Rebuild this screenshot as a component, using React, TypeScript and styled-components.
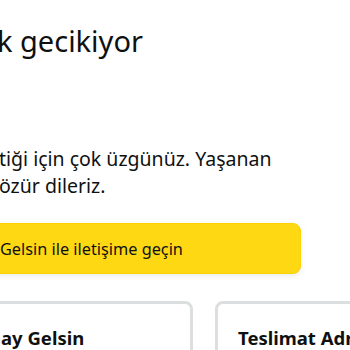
import React from "react";
import styled, { createGlobalStyle } from "styled-components";

const Global = createGlobalStyle`
  html, body { margin: 0; padding: 0; background: #ffffff; }
  body { font-family: "Noto Sans", "Open Sans", Arial, sans-serif; color: #0f1111; overflow: hidden; }
`;

const Page = styled.main`
  width: 350px;
  height: 350px;
  overflow: hidden;
  display: flex;
  flex-direction: column;
  & > * { flex-shrink: 0; }
`;

const Title = styled.h1`
  margin: 23px 0 0 -3px;
  font-size: 29px;
  font-weight: 400;
  line-height: 36px;
  white-space: nowrap;
`;

const Message = styled.p`
  margin: 86px 0 0 -1px;
  font-size: 19.5px;
  line-height: 27px;
  white-space: nowrap;
`;

const ContactButton = styled.button`
  margin: 24px 0 0 -20px;
  width: 321px;
  height: 51px;
  box-sizing: border-box;
  border: 1px solid #fcd200;
  border-radius: 8px;
  background: #ffd814;
  color: #0f1111;
  font-family: inherit;
  font-size: 16.3px;
  text-align: left;
  padding: 0 0 0 19px;
  box-shadow: 0 2px 5px 0 rgba(213, 217, 217, 0.5);
`;

const CardRow = styled.section`
  margin: 27px 0 0 -20px;
  display: grid;
  grid-template-columns: 213px 213px;
  column-gap: 22px;
`;

const Card = styled.article`
  border: 3px solid #dcdfdf;
  border-radius: 8px;
  padding: 20px 20px;
  height: 120px;
  box-sizing: border-box;
`;

const CardTitle = styled.h2<{ $shift?: number }>`
  margin: 0 0 0 ${(p) => p.$shift ?? 0}px;
  font-size: 18.5px;
  font-weight: 700;
  line-height: 28px;
  white-space: nowrap;
`;

export default function App() {
  return (
    <>
      <Global />
      <Page>
        <Title>k gecikiyor</Title>
        <Message>
          tiği için çok üzgünüz. Yaşanan
          <br />
          özür dileriz.
        </Message>
        <ContactButton>Gelsin ile iletişime geçin</ContactButton>
        <CardRow>
          <Card>
            <CardTitle $shift={-2}>ay Gelsin</CardTitle>
          </Card>
          <Card>
            <CardTitle>Teslimat Adresi</CardTitle>
          </Card>
        </CardRow>
      </Page>
    </>
  );
}
